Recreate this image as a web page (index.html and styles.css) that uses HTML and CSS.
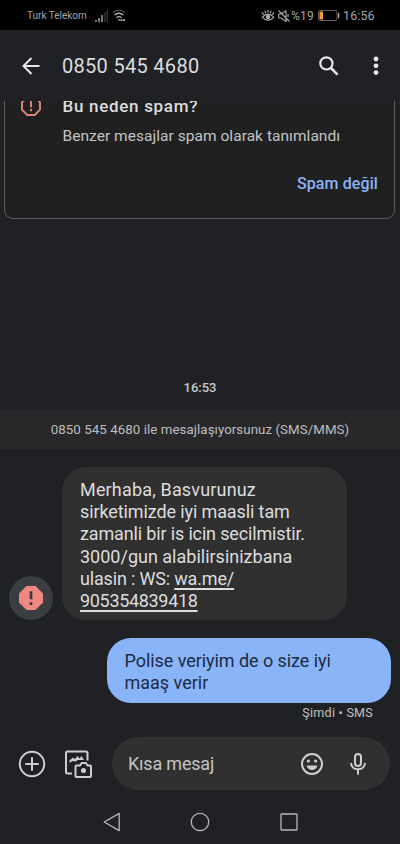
FILE: index.html
```
<!DOCTYPE html>
<html lang="tr">
<head>
<meta charset="utf-8">
<title>0850 545 4680</title>
<link rel="stylesheet" href="styles.css">
</head>
<body>
<div class="status">
  <span class="carrier">Turk Telekom</span>
  <svg class="signal" width="13" height="12" viewBox="0 0 13 12"><path d="M1 10v2M4 8v4M7 5v7" stroke="#aaa" stroke-width="1.4"/><path d="M10 2v10M12.3 0v12" stroke="#3d3d3d" stroke-width="1.2"/></svg>
  <svg class="wifi" width="14" height="13" viewBox="0 0 14 13" fill="none"><path d="M1 3.5Q7-1 13 3.5" stroke="#555" stroke-width="1.2"/><path d="M2.5 6.1Q7 2.4 11.5 6.1M4.4 8.7Q7 6.6 9.6 8.7" stroke="#aaa" stroke-width="1.3"/><path d="M5.6 10.2h2.8L7 12.2z" fill="#aaa"/><path d="M8.5 11.2h4.5" stroke="#aaa" stroke-width="1.7" stroke-dasharray="2 .6"/></svg>
  <svg class="eye" width="14" height="13" viewBox="0 0 14 13" fill="none" stroke="#aaa" stroke-width="1.1"><path d="M1.2 8.3Q7 2 12.8 8.3 7 14 1.2 8.3zM.8 3.5l2 2M3.8 1.8l1 2.4M7 1v2.8M10.2 1.8l-1 2.4M13.2 3.5l-2 2"/><circle cx="7" cy="8" r="1.7" fill="#aaa"/></svg>
  <svg class="mute" width="12" height="12" viewBox="0 0 12 12" fill="none" stroke="#aaa" stroke-width="1.1"><path d="M.7 4v4H3l5 3.5V.8L3 4zM.5.5l11 11M10 4v3"/></svg>
  <span class="percent">%19</span>
  <svg class="battery" width="22" height="11" viewBox="0 0 22 11"><rect x=".5" y=".5" width="18.5" height="10" rx="1" fill="none" stroke="#66605a"/><path d="M1.5 1.5H5v8H1.5z" fill="#f79b35"/><path d="M20.6 3v5" stroke="#aaa" stroke-width="1.3"/></svg>
  <span class="clock">16:56</span>
</div>
<header class="appbar">
  <svg class="back" width="18" height="18" viewBox="0 0 18 18" fill="none" stroke="#e6e7e9" stroke-width="2"><path d="M17.5 9H1.5M9.5 1 1.5 9l8 8"/></svg>
  <h1><span class="number">0850 545 4680</span></h1>
  <svg class="search" width="20" height="20" viewBox="0 0 20 20" fill="none" stroke="#e6e7e9"><circle cx="7.4" cy="7.4" r="6.1" stroke-width="2.2"/><path d="m12 12 6.5 6.6" stroke-width="2.6"/></svg>
  <svg class="more" width="6" height="20" viewBox="0 0 6 20" fill="#e6e7e9"><circle cx="3" cy="3" r="2.4"/><circle cx="3" cy="9.8" r="2.4"/><circle cx="3" cy="16.6" r="2.4"/></svg>
</header>
<main class="thread">
  <section class="card">
    <svg class="warn" width="20" height="20" viewBox="0 0 20 20" fill="none" stroke="#e3857e" stroke-width="1.9"><path d="M6.3 1h7.4L19 6.3v7.4L13.7 19H6.3L1 13.7V6.3z"/><path d="M10 4.6v6.8M10 13v2.2"/></svg>
    <div class="card-text">
      <h2><span class="card-title">Bu neden spam?</span></h2>
      <p><span class="card-desc">Benzer mesajlar spam olarak tanımlandı</span></p>
      <div class="action"><span class="not-spam">Spam değil</span></div>
    </div>
  </section>
  <time class="time">16:53</time>
  <div class="notice"><span class="notice-text">0850 545 4680 ile mesajlaşıyorsunuz (SMS/MMS)</span></div>
  <div class="incoming">
    <div class="avatar"><svg width="24" height="24" viewBox="0 0 24 24"><path d="M7.5 0h9L24 7.5v9L16.5 24h-9L0 16.5v-9z" fill="#ee8880"/><path d="M12 5.3v8M12 16.3v2.8" stroke="#393b3d" stroke-width="2.7"/></svg></div>
    <div class="bubble received">
      <div><span class="r1">Merhaba, Basvurunuz</span></div>
      <div><span class="r2">sirketimizde iyi maasli tam</span></div>
      <div><span class="r3">zamanli bir is icin secilmistir.</span></div>
      <div><span class="r4">3000/gun alabilirsinizbana</span></div>
      <div><span class="r5">ulasin : WS: <u>wa.me/</u></span></div>
      <div><span class="r6"><u>905354839418</u></span></div>
    </div>
  </div>
  <div class="bubble sent">
    <div><span class="s1">Polise veriyim de o size iyi</span></div>
    <div><span class="s2">maaş verir</span></div>
  </div>
  <div class="sent-status"><span class="state">Şimdi • SMS</span></div>
</main>
<div class="composer">
  <svg class="plus" width="28" height="28" viewBox="0 0 28 28" fill="none" stroke="#cdced0" stroke-width="2"><circle cx="14" cy="14" r="12.2"/><path d="M14 7.3v13.4M7.3 14h13.4"/></svg>
  <svg class="gallery" width="28" height="28" viewBox="0 0 28 28" fill="none" stroke="#cdced0" stroke-width="2"><path d="M8 23.5H3.5Q2 23.5 2 22V3q0-1.5 1.5-1.5H22q1.5 0 1.5 1.5v7.5"/><path d="M5.500 13V10.500l3.500-3 2 1.500L13.500 6l2 2.500 2-2.500L20 10h-6l-2.500 1.500-3-.5z" fill="#cdced0" stroke="none"/><path d="M12.500 15.500h3.500l1.800-2.500h4l1.800 2.500h2.400q1 0 1 1v9.500q0 1-1 1H12.500q-1 0-1-1v-9.500q0-1 1-1z"/><circle cx="19.500" cy="20.600" r="2.500" fill="#cdced0" stroke="none"/></svg>
  <div class="input">
    <span class="hint-box"><span class="hint">Kısa mesaj</span></span>
    <svg class="emoji" width="22" height="22" viewBox="0 0 22 22"><circle cx="11" cy="11" r="10" fill="none" stroke="#cdced0" stroke-width="2"/><circle cx="7.4" cy="8" r="1.6" fill="#cdced0"/><circle cx="14.6" cy="8" r="1.6" fill="#cdced0"/><path d="M5.5 12.500h11q-1.600 4.600-5.500 4.600t-5.500-4.600z" fill="#cdced0"/></svg>
    <svg class="mic" width="16" height="22" viewBox="0 0 16 22" fill="none" stroke="#cdced0" stroke-width="2"><rect x="5" y="1" width="6" height="12" rx="3"/><path d="M1 10q.6 6.200 7 6.200t7-6.200M8 16.200V21.500"/></svg>
  </div>
</div>
<nav class="nav">
  <svg width="18" height="20" viewBox="0 0 18 20" fill="none" stroke="#b5b6b8" stroke-width="1.3" stroke-linejoin="round"><path d="M17.200 1.400v17.200L2.200 10z"/></svg>
  <svg width="20" height="20" viewBox="0 0 20 20" fill="none" stroke="#b5b6b8" stroke-width="1.3"><circle cx="10" cy="10" r="8.700"/></svg>
  <svg width="18" height="20" viewBox="0 0 18 20" fill="none" stroke="#b5b6b8" stroke-width="1.3"><rect x="1" y="2" width="16" height="16" rx=".6"/></svg>
</nav>
</body>
</html>
```
FILE: styles.css
```
* { box-sizing: border-box; }
html { background: #202124; }
body { margin: 0; width: 400px; height: 844px; overflow: hidden; display: flex; flex-direction: column; background: #202124; color: #dcdddf; font-family: Roboto, "Noto Sans", sans-serif; }
svg { display: block; flex: none; }
h1, h2, p { margin: 0; font-weight: 400; }
span { white-space: nowrap; }

.status { height: 30px; flex: none; display: flex; align-items: center; background: #000; color: #a5a5a5; padding-left: 27px; padding-top: 1px; }
.carrier { width: 68px; font-size: 10px; }
.wifi { margin-left: 4px; }
.eye { margin-left: 135px; }
.mute { margin-left: 3px; }
.percent { width: 24px; margin-left: 1px; margin-right: 3px; font-size: 12px; letter-spacing: .2px; }
.clock { margin-left: 3px; font-size: 12.5px; letter-spacing: .1px; }

.appbar { height: 71px; flex: none; display: flex; align-items: center; padding: 0 0 0 22px; }
.appbar h1 { width: 257px; margin-left: 22px; font-size: 20px; line-height: 24px; letter-spacing: .3px; }
.more { margin-left: 34px; }

.thread { height: 625px; flex: none; overflow: hidden; }
.card { height: 138px; margin: -20px 5px 0 4px; padding: 14px 16px 0 16px; display: flex; background: #202020; border: 1px solid #5b5b5b; border-radius: 9px; }
.card-text { flex: 1; margin-left: 21.5px; }
.card h2 { font-size: 17px; font-weight: 500; line-height: 21px; letter-spacing: .7px; }
.card p { margin-top: 9px; font-size: 15.5px; line-height: 20px; letter-spacing: .04px; color: #c2c3c4; }
.action { margin-top: 28px; text-align: right; font-size: 16px; font-weight: 500; line-height: 20px; letter-spacing: .1px; color: #8ab4f8; }
.time { display: block; margin-top: 159px; height: 20px; text-align: center; font-size: 13px; font-weight: 500; line-height: 20px; color: #c8c9cb; }
.notice { margin-top: 12px; height: 39px; line-height: 40px; text-align: center; background: #28282a; color: #bdbec0; font-size: 13.3px; letter-spacing: .06px; }
.incoming { margin: 18px 0 0 9px; display: flex; align-items: flex-end; gap: 9px; }
.avatar { width: 44px; height: 44px; border-radius: 50%; background: #3b3e40; display: flex; align-items: center; justify-content: center; }
.bubble { font-size: 18px; line-height: 22.2px; border-radius: 24px; }
.received { width: 285px; height: 153px; padding: 12px 18px; background: #303030; }
.received u { text-decoration-thickness: 1.5px; text-underline-offset: 3px; text-decoration-skip-ink: none; }
.r1 { letter-spacing: .17px; }
.r2 { letter-spacing: -.11px; }
.r3 { letter-spacing: -.15px; }
.r5 { letter-spacing: -.17px; }
.r6 { letter-spacing: -.32px; }
.sent { width: 284px; height: 65px; margin: 18px 0 0 107px; padding: 12px 17.5px; background: #8ab4f8; color: #1d2b42; }
.s1 { letter-spacing: -.06px; }
.sent-status { padding-right: 27px; text-align: right; font-size: 12.5px; line-height: 20px; letter-spacing: .27px; color: #c0c1c3; }

.composer { height: 74px; flex: none; display: flex; align-items: center; padding: 1px 10px 0 18px; }
.gallery { margin-left: 18px; }
.input { width: 278px; height: 53px; margin-left: 20px; padding-left: 16px; border-radius: 27px; background: #303030; display: flex; align-items: center; }
.hint-box { width: 173px; font-size: 18px; letter-spacing: -.2px; color: #c3c4c5; }
.mic { margin-left: 27px; }
.nav { height: 44px; display: flex; justify-content: center; gap: 70px; padding: 12px 0 0 0; }
```
